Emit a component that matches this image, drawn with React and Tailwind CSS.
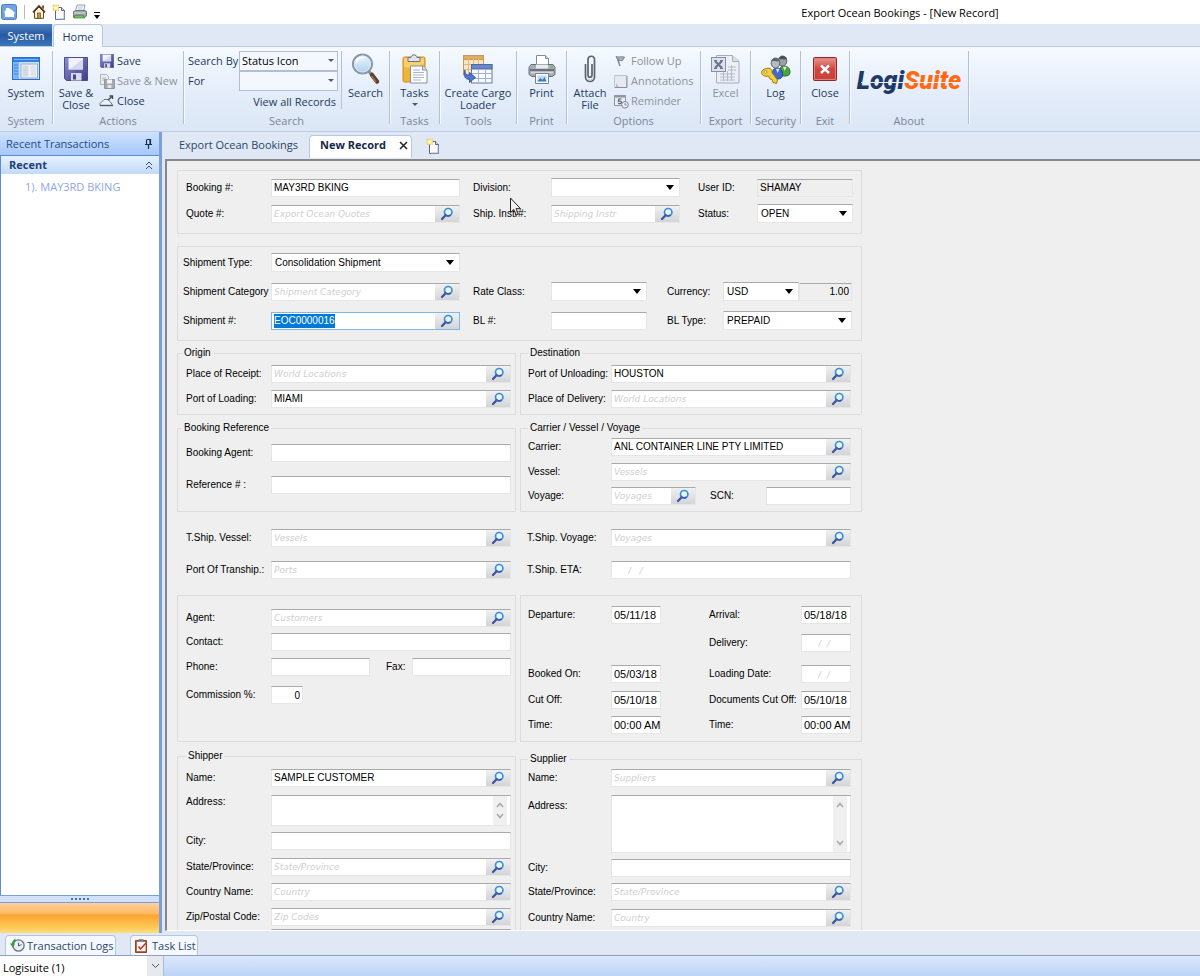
import { useEffect, useRef } from 'react';
import clsx from 'clsx';

/* ---------- small icons ---------- */

const LookupIcon = () => (
    <svg width="14" height="14" viewBox="0 0 14 14" fill="none">
        <path d="M5.6 8.2 2 12" stroke="#3c52a0" strokeWidth="2.2" strokeLinecap="round" />
        <circle cx="8.2" cy="5.2" r="3.7" fill="#eaf5fd" stroke="#3b8fd6" strokeWidth="1.7" />
        <path d="M5 7a3.7 3.7 0 0 0 5.6 1" stroke="#3a5db0" strokeWidth="1.7" />
    </svg>
);

const AppIcon = () => (
    <svg width="16" height="16" viewBox="0 0 16 16" className="shrink-0">
        <rect x="0.5" y="0.5" width="15" height="15" rx="2" fill="#6fa3e4" stroke="#4a7cc4" />
        <path d="M3 8 5 6V4h3l1 1 2 1 3 3-1 1v3H4V9z" fill="#fff" />
    </svg>
);

const HomeIcon = () => (
    <svg width="14" height="16" viewBox="0 0 14 16" className="shrink-0">
        <path d="M2.5 7.5v6.8h9V7.5L7 3z" fill="#f7efd2" stroke="#5b4a34" />
        <path d="M1 8.4 7 2l6 6.4" fill="none" stroke="#4a3526" strokeWidth="1.6" />
        <path d="M10 1.5h2v4l-2-2z" fill="#a8432d" />
        <rect x="5.5" y="9" width="3" height="5.5" fill="#c98e3f" stroke="#6b4a20" strokeWidth="0.7" />
    </svg>
);

const NewDocIcon = () => (
    <svg width="14" height="16" viewBox="0 0 14 16" className="shrink-0">
        <path d="M3.5 3.5h6l3 3v9h-9z" fill="#fdfdff" stroke="#56678a" />
        <path d="M9.5 3.5v3h3" fill="#dbe4f4" stroke="#56678a" />
        <path d="M12 8v7H5" fill="none" stroke="#a9b6d2" />
        <path d="M1 1h5.5v5.5H1z" fill="#fbe98a" stroke="#e2c23c" strokeWidth="0.8" strokeDasharray="1.5 1" />
        <circle cx="3.7" cy="3.7" r="1.5" fill="#fffbe0" />
    </svg>
);

const PrintIcon = () => (
    <svg width="16" height="16" viewBox="0 0 16 16" className="shrink-0">
        <path d="M5 1h8l-1.5 6H3.5z" fill="#fff" stroke="#7b8794" strokeWidth="0.8" />
        <path d="M6 3h5M5.5 5h5" stroke="#9fb0c0" strokeWidth="0.8" />
        <path d="M1.5 7.5 4 6.5h9l1.5 1v4.5l-2 1.5h-11z" fill="#9aa3ad" stroke="#5d666f" strokeWidth="0.8" />
        <path d="M2 9h11" stroke="#dfe4e9" />
        <path d="m3 11.5 8-.5 1.5 3H2z" fill="#6fc35a" stroke="#3f7d33" strokeWidth="0.7" />
    </svg>
);

const FloppyIcon = ({ size = 14 }) => (
    <svg width={size} height={size} viewBox="0 0 24 24" className="shrink-0">
        <defs>
            <linearGradient id="floppy" x1="0" y1="0" x2="1" y2="1">
                <stop offset="0" stopColor="#8d8fd0" />
                <stop offset="1" stopColor="#3c3b85" />
            </linearGradient>
        </defs>
        <path d="M0.5 0.5h23v23h-21l-2-2z" fill="url(#floppy)" stroke="#4b4b92" />
        <rect x="4.5" y="1" width="14.5" height="11.5" fill="#f1f2fb" />
        <path d="M5 12.5h14V2z" fill="#d5d7ee" />
        <rect x="7" y="16" width="10.5" height="7.5" fill="#d9dbe9" />
        <rect x="9" y="17.5" width="3" height="5" fill="#45459a" />
    </svg>
);

const SaveNewIcon = () => (
    <svg width="16" height="15" viewBox="0 0 16 15">
        <path d="M1.5 0.5h6l2 2v8h-8z" fill="#eceef2" stroke="#b0b4bb" />
        <path d="M3 4h4M3 6h4" stroke="#b0b4bb" />
        <path d="M5.5 5.5h10v9h-10z" fill="#a4a8b0" stroke="#92969e" />
        <rect x="8" y="5.5" width="5" height="4" fill="#f2f3f5" />
        <rect x="8.5" y="11" width="4" height="3" fill="#e2e4e8" />
    </svg>
);

const CloseFolderIcon = () => (
    <svg width="16" height="12" viewBox="0 0 16 12">
        <path d="M1 10.5V8.5l4-4h4l4 4.5v1.5z" fill="#eef1f6" stroke="#6b7787" />
        <path d="M1 10.5h13" stroke="#4d5a6b" strokeWidth="1.4" />
        <path d="m9 5 3.5-3M10.5 1h3v3" fill="none" stroke="#39455a" strokeWidth="1.3" />
    </svg>
);

const FlagIcon = () => (
    <svg width="12" height="12" viewBox="0 0 12 12">
        <path d="M1 1.5c2 1 5 0 8.5.5L7.5 5.5 4 5.8z" fill="#aab0bb" stroke="#7d8592" />
        <path d="M2 2.5 5 11" stroke="#7d8592" strokeWidth="1.4" />
    </svg>
);

const NoteIcon = () => (
    <svg width="14" height="13" viewBox="0 0 14 13">
        <path d="M0.5 0.5h12v12h-12z" fill="#e6e9f2" stroke="#bcc2cf" />
        <path d="M1 12.5h12V1" fill="none" stroke="#8a909e" />
        <path d="m2 8 3 4H2z" fill="#b9becb" />
    </svg>
);

const ReminderIcon = () => (
    <svg width="15" height="15" viewBox="0 0 15 15">
        <path d="M0.5 1.5h11v10h-11z" fill="#e9ecf3" stroke="#8f96a5" />
        <path d="M0.5 2.5h11" stroke="#8f96a5" strokeWidth="2" />
        <path d="M7.5 5H4.8l-.4 2.3c2-.6 3.4 0 3 1.5-.4 1-2 1.2-3.2.5" fill="none" stroke="#5d6473" strokeWidth="1.2" />
        <circle cx="11" cy="10.8" r="3.3" fill="#eef0f6" stroke="#7e8594" />
        <path d="M11 9v2h1.7" fill="none" stroke="#7e8594" />
    </svg>
);

const HistoryIcon = () => (
    <svg width="15" height="15" viewBox="0 0 15 15" className="shrink-0">
        <circle cx="8.5" cy="7.5" r="5.6" fill="#eaf0f8" stroke="#6c7688" strokeWidth="1.4" />
        <path d="M8.5 4.5V8l3-1.5" fill="none" stroke="#4b5a78" />
        <path d="M5.5 1.5C3.5 3 2.5 5 2.6 7" fill="none" stroke="#3f9a3c" strokeWidth="2" />
        <path d="M0 5.5h5.2L2.6 9.5z" fill="#3f9a3c" />
    </svg>
);

const TaskListIcon = () => (
    <svg width="13" height="14" viewBox="0 0 13 14" className="shrink-0">
        <path d="M0.5 1.5h11v12h-11z" fill="#c7683c" stroke="#8f4526" />
        <path d="M2 3h8.5v9H2z" fill="#f7f8fc" />
        <rect x="3.5" y="0" width="5" height="2.5" fill="#7f8899" />
        <path d="m3.5 7.5 2 2.5 5.5-6" fill="none" stroke="#c5342c" strokeWidth="1.6" />
    </svg>
);

/* ---------- 32px ribbon icons ---------- */

const SystemIcon = () => (
    <svg width="28" height="24" viewBox="0 0 28 24">
        <rect x="0.5" y="0.5" width="27" height="22" fill="#cfe4fb" stroke="#2a6fd0" />
        <rect x="1" y="1" width="26" height="4" fill="#2f7fe6" />
        <path d="M2 2.5h24" stroke="#7fb5f6" />
        <rect x="1" y="5" width="6" height="17" fill="#7db6f5" />
        <path d="M2 8h4M2 11h4M2 14h4M2 17h4" stroke="#3d84dc" />
        <rect x="9" y="7" width="16.5" height="14" fill="#f3f6fa" stroke="#8fa9c8" />
        <rect x="10.5" y="8.5" width="6" height="11" fill="#d3d9e1" />
        <rect x="18.5" y="8.5" width="5.5" height="11" fill="#e0e4ea" />
    </svg>
);

const SearchIcon = () => (
    <svg width="30" height="32" viewBox="0 0 30 32">
        <defs>
            <linearGradient id="lens" x1="0" y1="0" x2="0" y2="1">
                <stop offset="0" stopColor="#f1f8fe" />
                <stop offset="1" stopColor="#a9cff0" />
            </linearGradient>
        </defs>
        <path d="m17.5 18 3.5 4" stroke="#8c8c8c" strokeWidth="3" />
        <path d="m21 22 5 6.5" stroke="#5e4230" strokeWidth="4.5" strokeLinecap="round" />
        <path d="m20.5 23 4.5 6" stroke="#9b7556" strokeWidth="1.3" />
        <circle cx="11.5" cy="11" r="9.6" fill="url(#lens)" stroke="#8a97a4" strokeWidth="2" />
        <circle cx="11.5" cy="11" r="8" fill="none" stroke="#d9e7f3" />
        <path d="M5 10c1-4 4-6 8-5.5" fill="none" stroke="#fff" strokeWidth="2" />
    </svg>
);

const TasksIcon = () => (
    <svg width="26" height="30" viewBox="0 0 26 30">
        <rect x="1" y="3" width="22" height="25" rx="1.5" fill="#f0b43a" stroke="#c98c1f" />
        <path d="M2 4h20v6c-8 4-14 4-20 3z" fill="#f9cf6f" />
        <path d="M6 3.5h3c.5-3.5 5.5-3.5 6 0h3v4H6z" fill="#dfe3ea" stroke="#69727f" />
        <path d="M8.5 12h12l4.5 4v13H8.5z" fill="#fdfdfe" stroke="#8390a5" />
        <path d="M20.5 12v4H25" fill="#dce3ee" stroke="#8390a5" />
        <path d="M11 16h7M11 18.5h11M11 21h11M11 23.5h11M11 26h8" stroke="#a9b6c9" />
    </svg>
);

const CargoIcon = () => (
    <svg width="30" height="29" viewBox="0 0 30 29">
        <rect x="0.5" y="0.5" width="20" height="19" fill="#f7e6c4" stroke="#c79a58" />
        <rect x="0.5" y="0.5" width="20" height="4" fill="#e0ab62" stroke="#c79a58" />
        <path d="M5.5 4v15M10.5 4v15M15.5 4v15M1 9.5h19M1 14.5h19" stroke="#dcbb86" />
        <rect x="8.5" y="9.5" width="20.5" height="18.5" fill="#f8faff" stroke="#6679a8" />
        <rect x="8.5" y="9.5" width="20.5" height="4.5" fill="#6c86cb" stroke="#53689f" />
        <path d="M15.5 14v14M22.5 14v14M9 18.5h20M9 23.5h20" stroke="#a4b1d2" />
        <path d="M2 15c0 4 1.5 5.5 4.5 5.5v-3l6 5-6 5v-3C2 24.5 0 20.5 2 15z" fill="#4a78d6" stroke="#2a4a94" strokeWidth="0.8" />
    </svg>
);

const PrinterIcon = () => (
    <svg width="28" height="29" viewBox="0 0 28 29">
        <path d="M8.5 0.5h9l3 3v8h-12z" fill="#fff" stroke="#828c97" />
        <path d="M17.5 0.5v3h3" fill="#dde3ea" stroke="#828c97" />
        <path d="M3 9.5h22l2 3v7l-3 2H4l-3-2v-7z" fill="#a9aeb6" stroke="#676d76" />
        <path d="M8 9.5h12v4H8z" fill="#e9ecf0" />
        <path d="M2 14h24v2H2z" fill="#6b717b" />
        <path d="M3 17.5h22" stroke="#d5d9de" strokeWidth="1.5" />
        <circle cx="24" cy="12" r="1" fill="#5fbf4a" />
        <path d="M7.5 18.5h13v10h-13z" fill="#fdfeff" stroke="#79838f" />
        <path d="M9.5 20.5h9v6h-9z" fill="#bcdcf5" />
        <path d="m9.5 26 3-3 2 2 2-3 2 4.5h-9z" fill="#3c7cc4" />
    </svg>
);

const ClipIcon = () => (
    <svg width="12" height="28" viewBox="0 0 12 28" fill="none">
        <path d="M1.5 9v13c0 6 9 6 9 0V5c0-5-6.5-5-6.5 0v15c0 3 4 3 4 0V9" stroke="#5d646c" strokeWidth="1.7" />
        <path d="M2.5 22c.5 4 6 4 7 0" stroke="#b8bec5" strokeWidth="0.7" />
    </svg>
);

const ExcelIcon = () => (
    <svg width="29" height="29" viewBox="0 0 29 29">
        <path d="M5.5 0.5h16l6.5 6v21.5H5.5z" fill="#eceff5" stroke="#a5adbc" />
        <path d="M21.5 0.5v6H28" fill="#d8dde7" stroke="#a5adbc" />
        <path d="M9 19h15M9 22h15M9 25h15M12.5 16v10M16.5 16v10M20.5 10v16M17 12h8M17 15h8" stroke="#b4bac8" />
        <rect x="0.5" y="2.5" width="14" height="14" fill="#dde2ed" stroke="#8690a5" />
        <path d="m4 6 7 7M11 6l-7 7" stroke="#6d788f" strokeWidth="2.3" />
        <path d="M3 5.5h3M9 5.5h3M3 13.5h3M9 13.5h3" stroke="#6d788f" />
    </svg>
);

const LogIcon = () => (
    <svg width="30" height="29" viewBox="0 0 30 29">
        <path d="M18 18c0-5 2-7 5-7s6 2 6 6c0 3-2 4-5 4s-6 0-6-3z" fill="#46a53c" stroke="#2b7425" />
        <path d="M22 11.5 23.5 16l2-4z" fill="#e8f3e6" />
        <ellipse cx="21.5" cy="6" rx="4.3" ry="5" fill="#9ba1a9" stroke="#5a6068" />
        <path d="M18 4c1-4 7-4 8 0-2 1-5 0-8 0z" fill="#4a4f56" />
        <path d="M11 21c0-5 1.5-8 5-8s5.5 3 5.5 6c0 4-2 5-5 5s-5.5 0-5.5-3z" fill="#3f68d0" stroke="#24418f" />
        <path d="m15 13.5 1.5 4.5 2-4z" fill="#e6ecfa" />
        <ellipse cx="14.5" cy="8" rx="4.3" ry="5" fill="#b6bbc2" stroke="#5f656d" />
        <path d="M10.5 6c1-4 7-4 8.5 0-3 1-5 0-8.5 0z" fill="#60666e" />
        <path d="M5.5 13.5c4-1 6 1 5.500 4l5.500 7.500-1 3.500-3.500-1-1-3-2-.5-1.500-3c-4 1-7-1-7-3.500 0-2 2-3.500 5-4z" fill="#f2cf3f" stroke="#9c7a14" />
        <circle cx="4.5" cy="17" r="1.5" fill="#fff6cc" stroke="#9c7a14" strokeWidth="0.7" />
    </svg>
);

const ExitIcon = () => (
    <svg width="24" height="24" viewBox="0 0 24 24">
        <defs>
            <linearGradient id="exit" x1="0" y1="0" x2="0" y2="1">
                <stop offset="0" stopColor="#e59a94" />
                <stop offset="0.5" stopColor="#d1453f" />
                <stop offset="1" stopColor="#c9423c" />
            </linearGradient>
        </defs>
        <rect x="0.5" y="0.5" width="23" height="23" rx="1" fill="url(#exit)" stroke="#8b2a28" />
        <rect x="1.5" y="1.5" width="21" height="21" rx="0.5" fill="none" stroke="#e3827b" />
        <path d="m8 8.5 8 7.5M16 8.5 8 16" stroke="#fff" strokeWidth="2.4" />
    </svg>
);

/* ---------- ribbon ---------- */

const RibbonGroup = ({ title, className, children }) => (
    <section
        aria-label={title}
        className={clsx('flex h-[73px] shrink-0 flex-col border-r border-[#b4c1d5] shadow-[1px_0_0_#f7fafe]', className)}
    >
        <div className="flex h-[63px] shrink-0 items-start">{children}</div>
        <p className="text-center leading-[14px] text-[#7b8698]">{title}</p>
    </section>
);

const BigButton = ({ icon, children, disabled }) => (
    <button
        disabled={disabled}
        className="flex flex-1 flex-col items-center leading-[12px] text-[#1e3a5f] disabled:text-[#8c929c]"
    >
        <span className="flex h-[36px] items-center justify-center">{icon}</span>
        <span className="whitespace-pre">{children}</span>
    </button>
);

const SmallButton = ({ icon, children, disabled }) => (
    <button
        disabled={disabled}
        className="flex h-5 items-center gap-0.5 whitespace-nowrap text-[#1e3a5f] disabled:text-[#8c929c]"
    >
        <span className="flex w-4 justify-center">{icon}</span>
        {children}
    </button>
);

const RibbonSelect = ({ id, value }) => (
    <span className="relative flex">
        <select
            id={id}
            defaultValue={value}
            className="h-5 w-[99px] appearance-none border border-[#b2bfd2] bg-[#f4f8fe] pl-0.5 text-black"
        >
            <option>{value}</option>
        </select>
        <span className="pointer-events-none absolute top-2 right-1 border-x-[3px] border-t-[3px] border-x-transparent border-t-[#4a5a70]" />
    </span>
);

const Ribbon = () => (
    <div className="flex h-[86px] shrink-0 border-t border-b border-[#bccbe0] bg-gradient-to-b from-[#f6faff] via-[#e5eefa] to-[#dbe6f6] pt-1">
        <RibbonGroup title="System" className="w-[53px]">
            <BigButton icon={<SystemIcon />}>System</BigButton>
        </RibbonGroup>
        <RibbonGroup title="Actions" className="w-[131px]">
            <div className="flex w-[46px]">
                <BigButton icon={<FloppyIcon size={24} />}>{'Save &\nClose'}</BigButton>
            </div>
            <div className="flex flex-col">
                <SmallButton icon={<FloppyIcon />}>Save</SmallButton>
                <SmallButton icon={<SaveNewIcon />} disabled>Save &amp; New</SmallButton>
                <SmallButton icon={<CloseFolderIcon />}>Close</SmallButton>
            </div>
        </RibbonGroup>
        <RibbonGroup title="Search" className="w-[206px]">
            <div className="flex h-[58px] w-[158px] flex-col border-r border-[#b4c1d5] pr-[3px] pl-1">
                <div className="flex shrink-0 items-center justify-between whitespace-nowrap text-[#1e3a5f]">
                    <label htmlFor="searchBy">Search By</label>
                    <RibbonSelect id="searchBy" value="Status Icon" />
                </div>
                <div className="flex shrink-0 items-center justify-between text-[#1e3a5f]">
                    <label htmlFor="searchFor">For</label>
                    <RibbonSelect id="searchFor" value="" />
                </div>
                <button className="self-end pr-0.5 leading-[22px] text-[#1e3a5f]">View all Records</button>
            </div>
            <BigButton icon={<SearchIcon />}>Search</BigButton>
        </RibbonGroup>
        <RibbonGroup title="Tasks" className="w-[50px]">
            <BigButton icon={<TasksIcon />}>
                Tasks
                <span className="mx-auto mt-1 block w-0 border-x-[3px] border-t-[3px] border-x-transparent border-t-[#4a5a70]" />
            </BigButton>
        </RibbonGroup>
        <RibbonGroup title="Tools" className="w-[77px]">
            <BigButton icon={<CargoIcon />}>{'Create Cargo\nLoader'}</BigButton>
        </RibbonGroup>
        <RibbonGroup title="Print" className="w-[50px]">
            <BigButton icon={<PrinterIcon />}>Print</BigButton>
        </RibbonGroup>
        <RibbonGroup title="Options" className="w-[134px]">
            <div className="flex w-[46px]">
                <BigButton icon={<ClipIcon />}>{'Attach\nFile'}</BigButton>
            </div>
            <div className="flex flex-col">
                <SmallButton icon={<FlagIcon />} disabled>Follow Up</SmallButton>
                <SmallButton icon={<NoteIcon />} disabled>Annotations</SmallButton>
                <SmallButton icon={<ReminderIcon />} disabled>Reminder</SmallButton>
            </div>
        </RibbonGroup>
        <RibbonGroup title="Export" className="w-[50px]">
            <BigButton icon={<ExcelIcon />} disabled>Excel</BigButton>
        </RibbonGroup>
        <RibbonGroup title="Security" className="w-[50px]">
            <BigButton icon={<LogIcon />}>Log</BigButton>
        </RibbonGroup>
        <RibbonGroup title="Exit" className="w-[49px]">
            <BigButton icon={<ExitIcon />}>Close</BigButton>
        </RibbonGroup>
        <RibbonGroup title="About" className="w-[119px]">
            <div className="relative mx-auto mt-3.5 font-[Roboto,sans-serif] text-[25px] leading-[32px] font-black italic">
                <span className="text-[#1f3a68]">Logi</span>
                <span className="text-[#ff6a13]">Suite</span>
                <span className="absolute top-[17px] right-0 left-1 h-px bg-[#e9f0fa]" />
            </div>
        </RibbonGroup>
    </div>
);

/* ---------- form controls ---------- */

const box = 'h-[18px] border border-t-[#a9a9a9] border-x-[#e6e6e6] border-b-[#e6e6e6] bg-white text-black outline-none';
const hint = "placeholder:font-['DejaVu_Sans',sans-serif] placeholder:text-[9px] placeholder:italic placeholder:text-[#cfcfcf]";

const Row = ({ className, children }) => (
    <div className={clsx('flex items-center', className)}>{children}</div>
);

const Label = ({ id, className = 'w-[86px]', children }) => (
    <label htmlFor={id} className={clsx('shrink-0 whitespace-nowrap', className)}>{children}</label>
);

const Text = ({ className = 'w-[240px]', ...props }) => (
    <input type="text" className={clsx(box, hint, 'px-0.5', className)} {...props} />
);

const Lookup = ({ id, className = 'w-[240px]', value, placeholder, inputRef }) => (
    <span className={clsx(box, 'flex shrink-0 focus-within:border-[#7db8ea]', className)}>
        <input
            id={id}
            ref={inputRef}
            type="text"
            defaultValue={value}
            placeholder={placeholder}
            className={clsx('min-w-0 flex-1 px-0.5 outline-none selection:bg-[#0078d7] selection:text-white', hint)}
        />
        <button
            type="button"
            aria-label="Look up"
            className="flex w-6 items-center justify-center bg-gradient-to-b from-[#f1f1f2] to-[#d3d4d7]"
        >
            <LookupIcon />
        </button>
    </span>
);

const Combo = ({ id, className, value = '' }) => (
    <span className={clsx('relative flex shrink-0', className)}>
        <select id={id} defaultValue={value} className={clsx(box, 'h-[19px] w-full appearance-none pl-[3px]')}>
            <option>{value}</option>
        </select>
        <span className="pointer-events-none absolute top-[7px] right-1.5 border-x-4 border-t-[5px] border-x-transparent border-t-black" />
    </span>
);

const Group = ({ title, className, children }) => (
    <fieldset className={clsx('min-w-0 border border-[#dcdcdc]', className)}>
        {title && <legend className="px-0.5 leading-[12px]">{title}</legend>}
        {children}
    </fieldset>
);

const Address = ({ id, className }) => (
    <span className={clsx('flex w-[240px] shrink-0 border border-[#e6e6e6] border-t-[#a9a9a9] bg-white', className)}>
        <textarea id={id} className="min-w-0 flex-1 resize-none outline-none" />
        <span className="mr-[3px] flex w-3.5 flex-col items-center justify-between bg-[#f0f0f0] py-1.5">
            <svg width="8" height="6" viewBox="0 0 8 6" fill="none">
                <path d="m1 5 3-3.500L7 5" stroke="#a9a9a9" strokeWidth="1.600" />
            </svg>
            <svg width="8" height="6" viewBox="0 0 8 6" fill="none">
                <path d="m1 1 3 3.500L7 1" stroke="#a9a9a9" strokeWidth="1.600" />
            </svg>
        </span>
    </span>
);

const DatePair = ({ className, left, right }) => (
    <Row className={className}>
        {left ? (
            <>
                <Label id={left.id} className="w-[83px]">{left.label}</Label>
                <Text id={left.id} defaultValue={left.value} className="w-[50px] pr-0 text-[11px]" />
            </>
        ) : (
            <span className="w-[133px]" />
        )}
        <Label id={right.id} className="ml-12 w-[92px]">{right.label}</Label>
        <Text
            id={right.id}
            defaultValue={right.value}
            placeholder={right.placeholder}
            className={clsx('w-[50px] pr-0 text-[11px]', right.placeholder && 'pl-4')}
        />
    </Row>
);

const BookingForm = () => {
    const shipmentRef = useRef(null);

    useEffect(() => {
        shipmentRef.current.focus();
        shipmentRef.current.select();
    }, []);

    return (
        <form className="w-[685px] pb-4">
            <Group className="pt-[7px] pb-2.5 pl-2">
                <Row>
                    <Label id="booking" className="w-[85px]">Booking #:</Label>
                    <Text id="booking" defaultValue="MAY3RD BKING" className="w-[189px]" />
                    <Label id="division" className="ml-[13px] w-[78px]">Division:</Label>
                    <Combo id="division" className="w-[129px]" />
                    <Label id="user" className="ml-[18px] w-[59px]">User ID:</Label>
                    <Text id="user" defaultValue="SHAMAY" readOnly className="w-[96px] bg-[#efefef]!" />
                </Row>
                <Row className="mt-[7px]">
                    <Label id="quote" className="w-[85px]">Quote #:</Label>
                    <Lookup id="quote" placeholder="Export Ocean Quotes" className="w-[189px]" />
                    <span className="relative ml-[13px] flex w-[78px]">
                        <Label id="instr">Ship. Instr#:</Label>
                        {/* mouse pointer */}
                        <svg className="absolute -top-2.5 left-9" width="14" height="20" viewBox="0 0 14 20">
                            <path d="M1.5 1v14.5l3.3-3 2.2 5.5 2.3-1-2.3-5.3h4.5z" fill="#f4f4f4" fillOpacity="0.7" stroke="#222" />
                        </svg>
                    </span>
                    <Lookup id="instr" placeholder="Shipping Instr" className="w-[129px]" />
                    <Label id="status" className="ml-[18px] w-[59px]">Status:</Label>
                    <Combo id="status" value="OPEN" className="w-[96px]" />
                </Row>
            </Group>

            <Group className="mt-3 pt-1.5 pb-2.5 pl-[5px]">
                <Row>
                    <Label id="shipType" className="w-[88px]">Shipment Type:</Label>
                    <Combo id="shipType" value="Consolidation Shipment" className="w-[189px]" />
                </Row>
                <Row className="mt-2.5">
                    <Label id="shipCat" className="w-[88px]">Shipment Category</Label>
                    <Lookup id="shipCat" placeholder="Shipment Category" className="w-[189px]" />
                    <Label id="rate" className="ml-[13px] w-[78px]">Rate Class:</Label>
                    <Combo id="rate" className="w-[96px]" />
                    <Label id="currency" className="ml-5 w-[56px]">Currency:</Label>
                    <Combo id="currency" value="USD" className="w-[76px]" />
                    <Text aria-label="Exchange rate" defaultValue="1.00" readOnly className="w-[53px] bg-[#efefef]! text-right" />
                </Row>
                <Row className="mt-2.5">
                    <Label id="shipNo" className="w-[88px]">Shipment #:</Label>
                    <Lookup id="shipNo" inputRef={shipmentRef} value="EOC0000016" className="w-[189px]" />
                    <Label id="bl" className="ml-[13px] w-[78px]">BL #:</Label>
                    <Text id="bl" className="w-[96px]" />
                    <Label id="blType" className="ml-5 w-[56px]">BL Type:</Label>
                    <Combo id="blType" value="PREPAID" className="w-[129px]" />
                </Row>
            </Group>

            <div className="mt-1.5 flex gap-1">
                <Group title="Origin" className="w-[339px] pt-1.5 pb-1.5 pl-2 [&>legend]:-ml-1">
                    <Row>
                        <Label id="receipt" className="w-[85px]">Place of Receipt:</Label>
                        <Lookup id="receipt" placeholder="World Locations" />
                    </Row>
                    <Row className="mt-[7px]">
                        <Label id="loading" className="w-[85px]">Port of Loading:</Label>
                        <Lookup id="loading" value="MIAMI" />
                    </Row>
                </Group>
                <Group title="Destination" className="flex-1 pt-1.5 pb-1.5 pl-[7px]">
                    <Row>
                        <Label id="unloading" className="w-[83px]">Port of Unloading:</Label>
                        <Lookup id="unloading" value="HOUSTON" />
                    </Row>
                    <Row className="mt-[7px]">
                        <Label id="delivery" className="w-[83px]">Place of Delivery:</Label>
                        <Lookup id="delivery" placeholder="World Locations" />
                    </Row>
                </Group>
            </div>

            <div className="mt-[7px] flex gap-1">
                <Group title="Booking Reference" className="w-[339px] pt-2.5 pl-2 [&>legend]:-ml-1">
                    <Row>
                        <Label id="bkAgent" className="w-[85px]">Booking Agent:</Label>
                        <Text id="bkAgent" />
                    </Row>
                    <Row className="mt-3.5">
                        <Label id="reference" className="w-[85px]">Reference # :</Label>
                        <Text id="reference" />
                    </Row>
                </Group>
                <Group title="Carrier / Vessel / Voyage" className="flex-1 pt-1 pb-1.5 pl-[7px]">
                    <Row>
                        <Label id="carrier" className="w-[83px]">Carrier:</Label>
                        <Lookup id="carrier" value="ANL CONTAINER LINE PTY LIMITED" />
                    </Row>
                    <Row className="mt-[7px]">
                        <Label id="vessel" className="w-[83px]">Vessel:</Label>
                        <Lookup id="vessel" placeholder="Vessels" />
                    </Row>
                    <Row className="mt-1.5">
                        <Label id="voyage" className="w-[83px]">Voyage:</Label>
                        <Lookup id="voyage" placeholder="Voyages" className="w-[85px]" />
                        <Label id="scn" className="ml-3.5 w-[56px]">SCN:</Label>
                        <Text id="scn" className="w-[85px]" />
                    </Row>
                </Group>
            </div>

            <div className="mt-[17px] flex flex-col gap-3.5">
                <Row className="pl-[9px]">
                    <Label id="tVessel" className="w-[85px]">T.Ship. Vessel:</Label>
                    <Lookup id="tVessel" placeholder="Vessels" />
                    <Label id="tVoyage" className="ml-4 w-[84px]">T.Ship. Voyage:</Label>
                    <Lookup id="tVoyage" placeholder="Voyages" />
                </Row>
                <Row className="pl-[9px]">
                    <Label id="tPort" className="w-[85px]">Port Of Tranship.:</Label>
                    <Lookup id="tPort" placeholder="Ports" />
                    <Label id="tEta" className="ml-4 w-[84px]">T.Ship. ETA:</Label>
                    <Text id="tEta" placeholder="/   /" className="w-[240px] pl-4" />
                </Row>
            </div>

            <div className="mt-4 flex gap-1">
                <Group className="w-[339px] pt-[13px] pl-2">
                    <Row>
                        <Label id="agent" className="w-[85px]">Agent:</Label>
                        <Lookup id="agent" placeholder="Customers" />
                    </Row>
                    <Row className="mt-1.5">
                        <Label id="contact" className="w-[85px]">Contact:</Label>
                        <Text id="contact" />
                    </Row>
                    <Row className="mt-[7px]">
                        <Label id="phone" className="w-[85px]">Phone:</Label>
                        <Text id="phone" className="w-[99px]" />
                        <Label id="fax" className="ml-4 w-[26px]">Fax:</Label>
                        <Text id="fax" className="w-[99px]" />
                    </Row>
                    <Row className="mt-2.5">
                        <Label id="commission" className="w-[85px]">Commission %:</Label>
                        <Text id="commission" defaultValue="0" className="w-8 text-right" />
                    </Row>
                </Group>
                <Group className="flex-1 pt-2.5 pb-[7px] pl-[7px]">
                    <DatePair
                        left={{ id: 'departure', label: 'Departure:', value: '05/11/18' }}
                        right={{ id: 'arrival', label: 'Arrival:', value: '05/18/18' }}
                    />
                    <DatePair className="mt-2.5" right={{ id: 'delDate', label: 'Delivery:', placeholder: '/  /' }} />
                    <DatePair
                        className="mt-[13px]"
                        left={{ id: 'bookedOn', label: 'Booked On:', value: '05/03/18' }}
                        right={{ id: 'loadDate', label: 'Loading Date:', placeholder: '/  /' }}
                    />
                    <DatePair
                        className="mt-2"
                        left={{ id: 'cutOff', label: 'Cut Off:', value: '05/10/18' }}
                        right={{ id: 'docCutOff', label: 'Documents Cut Off:', value: '05/10/18' }}
                    />
                    <DatePair
                        className="mt-[7px]"
                        left={{ id: 'cutTime', label: 'Time:', value: '00:00 AM' }}
                        right={{ id: 'docTime', label: 'Time:', value: '00:00 AM' }}
                    />
                </Group>
            </div>

            <div className="mt-2 flex items-start gap-1">
                <Group title="Shipper" className="w-[339px] pt-[7px] pb-4 pl-2">
                    <Row>
                        <Label id="shName" className="w-[85px]">Name:</Label>
                        <Lookup id="shName" value="SAMPLE CUSTOMER" />
                    </Row>
                    <Row className="mt-2 items-start!">
                        <Label id="shAddress" className="w-[85px]">Address:</Label>
                        <Address id="shAddress" className="h-[31px]" />
                    </Row>
                    <Row className="mt-1.5">
                        <Label id="shCity" className="w-[85px]">City:</Label>
                        <Text id="shCity" />
                    </Row>
                    <Row className="mt-2">
                        <Label id="shState" className="w-[85px]">State/Province:</Label>
                        <Lookup id="shState" placeholder="State/Province" />
                    </Row>
                    <Row className="mt-[7px]">
                        <Label id="shCountry" className="w-[85px]">Country Name:</Label>
                        <Lookup id="shCountry" placeholder="Country" />
                    </Row>
                    <Row className="mt-[7px]">
                        <Label id="shZip" className="w-[85px]">Zip/Postal Code:</Label>
                        <Lookup id="shZip" placeholder="Zip Codes" />
                    </Row>
                    <Row className="mt-[3px] pl-[85px]">
                        <Text aria-label="Shipper phone" />
                    </Row>
                </Group>
                <Group title="Supplier" className="mt-[3px] flex-1 pt-1 pb-4 pl-[7px]">
                    <Row>
                        <Label id="suName" className="w-[83px]">Name:</Label>
                        <Lookup id="suName" placeholder="Suppliers" />
                    </Row>
                    <Row className="mt-2 items-start!">
                        <Label id="suAddress" className="w-[83px] pt-1">Address:</Label>
                        <Address id="suAddress" className="h-[58px]" />
                    </Row>
                    <Row className="mt-1.5">
                        <Label id="suCity" className="w-[83px]">City:</Label>
                        <Text id="suCity" />
                    </Row>
                    <Row className="mt-1.5">
                        <Label id="suState" className="w-[83px]">State/Province:</Label>
                        <Lookup id="suState" placeholder="State/Province" />
                    </Row>
                    <Row className="mt-2">
                        <Label id="suCountry" className="w-[83px]">Country Name:</Label>
                        <Lookup id="suCountry" placeholder="Country" />
                    </Row>
                </Group>
            </div>
        </form>
    );
};

/* ---------- shell ---------- */

const TitleBar = () => (
    <header className="flex h-6 shrink-0 items-center bg-white">
        <div className="flex w-[100px] shrink-0 items-center gap-1.5 pl-px">
            <AppIcon />
            <span className="mx-px h-3.5 w-px bg-[#b8b8b8]" />
            <button aria-label="Home"><HomeIcon /></button>
            <button aria-label="New"><NewDocIcon /></button>
            <button aria-label="Print"><PrintIcon /></button>
            <button aria-label="Customize toolbar" className="flex flex-col items-center gap-0.5 pt-1.5">
                <span className="h-px w-1.5 bg-black" />
                <span className="border-x-[3px] border-t-4 border-x-transparent border-t-black" />
            </button>
        </div>
        <h1 className="flex-1 pt-0.5 pl-[500px] text-center whitespace-nowrap text-black">
            Export Ocean Bookings - [New Record]
        </h1>
    </header>
);

const SidePanel = () => (
    <aside className="flex w-[162px] shrink-0 flex-col border-r-[3px] border-[#7c9edb] bg-white">
        <div className="flex h-6 items-center justify-between border-b border-[#5d8bd4] bg-gradient-to-b from-[#cfe2fd] to-[#a6c8fa] pr-1.5 pl-1.5 text-[#1f4a8a]">
            <span>Recent Transactions</span>
            <svg width="9" height="10" viewBox="0 0 9 10" fill="none">
                <path d="M2.5 0.5h4v5M1 5.5h7M4.5 6v4M2.5 1v4M6 1v4" stroke="#16315c" strokeWidth="1.2" />
            </svg>
        </div>
        <div className="flex h-[18px] items-center justify-between border-l border-[#5d8bd4] bg-gradient-to-b from-[#e6f1ff] to-[#c3daf7] pr-1.5 pl-2 font-bold text-[#1d3f7a]">
            <span>Recent</span>
            <svg width="8" height="9" viewBox="0 0 8 9" fill="none">
                <path d="m1 4 3-3 3 3M1 8l3-3 3 3" stroke="#35527f" />
            </svg>
        </div>
        <div className="flex-1 border-l border-[#5d8bd4] pt-1.5 pl-6">
            <a href="#" className="block text-[#8ea6e8]">1). MAY3RD BKING</a>
        </div>
        <div className="flex h-2 items-center justify-center gap-0.5 border-y border-[#7c9edb] bg-[#cfe1fb]">
            {[0, 1, 2, 3, 4].map(dot => (
                <span key={dot} className="h-0.5 w-0.5 bg-[#5070a8]" />
            ))}
        </div>
        <div className="h-[30px] bg-linear-[to_bottom,#ffd09a_0%,#ffb964_35%,#fda532_40%,#ffc24f_75%,#ffdc7c_100%]" />
    </aside>
);

const DocumentTabs = () => (
    <nav className="flex h-[27px] shrink-0 items-end pb-px text-[#2c4568]">
        <a href="#" className="w-[147px] pl-[17px] leading-[26px] whitespace-nowrap">Export Ocean Bookings</a>
        <div className="flex h-[23px] w-[103px] items-center justify-between rounded-t border border-b-0 border-[#b7c7de] bg-white pr-[3px] pb-1 pl-2.5 font-bold whitespace-nowrap text-[#14284a]">
            New Record
            <button aria-label="Close tab">
                <svg width="9" height="9" viewBox="0 0 9 9">
                    <path d="m1 1 7 7M8 1 1 8" stroke="#222" strokeWidth="1.5" />
                </svg>
            </button>
        </div>
        <button aria-label="New tab" className="mb-1 ml-3.5"><NewDocIcon /></button>
    </nav>
);

const App = () => (
    <div className="flex h-screen flex-col overflow-hidden bg-[#dfe8f4] font-['Open_Sans','Noto_Sans',sans-serif] text-[11px] leading-[14px]">
        <TitleBar />
        <nav className="flex h-[22px] shrink-0">
            <a href="#" className="w-[52px] bg-gradient-to-b from-[#4f83c4] via-[#28599f] to-[#3a77bd] text-center leading-[24px] text-white">System</a>
            <a href="#" className="z-10 -mb-px ml-px w-[50px] rounded-t border border-b-0 border-[#b7c7de] bg-[#f8fbff] text-center leading-[24px] text-[#1e3a5f]">Home</a>
        </nav>
        <Ribbon />
        <div className="flex min-h-0 flex-1">
            <SidePanel />
            <main className="flex min-w-0 flex-1 flex-col pb-0.5">
                <DocumentTabs />
                <div className="ml-[3px] min-h-0 flex-1 overflow-hidden border-t-2 border-b border-l-2 border-t-[#84878c] border-b-white border-l-[#84878c] bg-[#efefef] pt-[9px] pl-2.5 font-['Liberation_Sans',Arial,sans-serif] text-[10px] text-black">
                    <BookingForm />
                </div>
            </main>
        </div>
        <footer className="shrink-0">
            <div className="flex h-[23px] items-end border-b border-[#8b9fc0] pl-[5px] text-[#2c4568]">
                <button className="flex h-5 w-[111px] items-center gap-0.5 rounded-t border border-b-0 border-[#b7c7de] bg-[#f5f9ff] pl-1 whitespace-nowrap">
                    <HistoryIcon />
                    Transaction Logs
                </button>
                <button className="ml-3.5 flex h-5 w-[68px] items-center gap-1 rounded-t border border-b-0 border-[#b7c7de] bg-[#f5f9ff] pl-1 whitespace-nowrap">
                    <TaskListIcon />
                    Task List
                </button>
            </div>
            <div className="flex h-5 bg-gradient-to-b from-[#dce9fc] to-[#bcd4f8]">
                <span className="relative flex w-[164px] border-r border-[#a9bcd8] bg-white">
                    <select aria-label="Session" className="w-full appearance-none pt-1 pl-[3px] text-black">
                        <option>Logisuite (1)</option>
                    </select>
                    <span className="pointer-events-none absolute inset-y-0 right-0 flex w-4 items-center justify-center bg-[#e6e9ee]">
                        <svg width="9" height="6" viewBox="0 0 9 6" fill="none">
                            <path d="m1 1 3.5 3.5L8 1" stroke="#555" />
                        </svg>
                    </span>
                </span>
            </div>
        </footer>
    </div>
);

export default App;
